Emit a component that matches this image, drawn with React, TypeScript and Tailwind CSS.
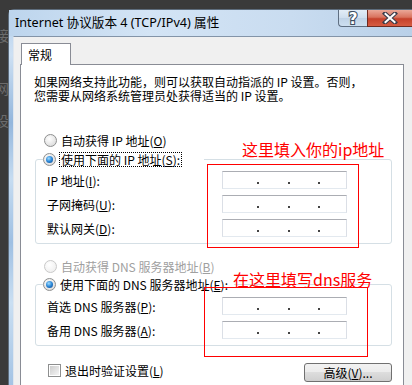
import type { ReactNode } from 'react'

function Radio({ checked, disabled }: { checked?: boolean; disabled?: boolean }) {
  return (
    <span
      className={
        disabled
          ? 'w-[13px] h-[13px] shrink-0 rounded-full border border-[#c9c9c9] bg-[radial-gradient(circle_at_40%_35%,#ffffff,#ebebeb)]'
          : 'w-[13px] h-[13px] shrink-0 rounded-full border border-[#8e8f8f] bg-[radial-gradient(circle_at_40%_35%,#ffffff,#d4d4d4)] flex items-center justify-center'
      }
    >
      {checked && (
        <span className="w-[7px] h-[7px] rounded-full bg-[radial-gradient(circle_at_40%_35%,#9fdcff,#2a86d6_50%,#0b3f86)]" />
      )}
    </span>
  )
}

function IpBox() {
  return (
    <div className="w-[125px] h-[18px] shrink-0 bg-white border border-t-[#abadb3] border-x-[#dbdfe6] border-b-[#e3e9ef] flex items-end pb-[4px] pl-[34px]">
      <span className="w-[2px] h-[2px] bg-[#444]" />
      <span className="w-[2px] h-[2px] bg-[#444] ml-[29px]" />
      <span className="w-[2px] h-[2px] bg-[#444] ml-[28px]" />
    </div>
  )
}

function Row({ children }: { children: ReactNode }) {
  return (
    <div className="h-[24px] flex items-center">
      <span className="w-[175px] shrink-0 whitespace-nowrap">{children}</span>
      <IpBox />
    </div>
  )
}

export default function App() {
  return (
    <div className="relative w-[412px] h-[385px] overflow-hidden bg-[#3a3a3a] flex flex-col text-[12px] leading-[13px] text-black font-['Noto_Sans_CJK_SC',sans-serif]">
      <div className="h-[9px] shrink-0" />
      <div className="flex flex-1 min-h-0">
        {/* desktop behind the window */}
        <div className="w-[8px] shrink-0 overflow-hidden text-[14px] leading-[14px] text-[#6c6c6c]">
          <div className="ml-[-5px] mt-[19px]">接</div>
          <div className="ml-[-5px] mt-[39px]">网</div>
          <div className="ml-[-5px] mt-[18px]">设</div>
        </div>

        {/* window */}
        <div className="flex-1 flex flex-col rounded-tl-[6px] border-l border-t border-[#5d6c7c] bg-[linear-gradient(180deg,#b4cfeb,#cde0f3_12%,#93b6dc_30%,#c6dcf1_45%,#9ebfe2_62%,#cadff2_78%,#a4c3e4)]">
          <div className="h-[26px] shrink-0 flex items-start bg-[linear-gradient(90deg,#bdd5ed,#d3e4f5_35%,#c9dcf0_70%,#b9d0e8)]">
            <span className="mt-[5px] ml-[6px] leading-[16px] text-[12.6px] whitespace-nowrap font-['Noto_Sans','Noto_Sans_CJK_SC',sans-serif]">
              Internet 协议版本 4 (TCP/IPv4) 属性
            </span>
            <div className="flex-1" />
            <div className="w-[29px] h-[17px] border-l border-b border-[#5f6f82] rounded-bl-[4px] bg-[linear-gradient(180deg,#e3edf7,#cfdeee_50%,#bfd2e6_50%,#cddff0)] flex items-center justify-center">
              <svg width="14" height="16" viewBox="0 0 14 16">
                <text x="7" y="13.5" textAnchor="middle" fontSize="15" fontWeight="700" fontFamily="DejaVu Sans, sans-serif" fill="#ffffff" stroke="#404e60" strokeWidth="2.2" paintOrder="stroke">?</text>
              </svg>
            </div>
            <div className="w-[45px] h-[17px] border-b border-l border-[#6e2b20] bg-[linear-gradient(180deg,#eaa898,#d9735e_45%,#c5412b_55%,#d65c42)] flex items-center justify-center">
              <svg width="16" height="12" viewBox="0 0 16 12">
                <path d="M3 1.5 L13 10.5 M13 1.5 L3 10.5" stroke="#3d3d4a" strokeWidth="4.2" strokeLinecap="square" />
                <path d="M3.5 2 L12.5 10 M12.5 2 L3.5 10" stroke="#ffffff" strokeWidth="2" strokeLinecap="square" />
              </svg>
            </div>
          </div>

          <div className="flex flex-1 min-h-0">
            <div className="w-[4px] shrink-0" />
            {/* client area */}
            <div className="flex-1 flex flex-col bg-[#f0f0f0] border-l border-t border-l-[#dfe6ee] border-t-[#8394a8] pl-[6px] pt-[6px]">
              <div className="relative z-[1] -mb-px ml-[1px] w-[50px] h-[22px] border border-b-0 border-[#898c95] bg-white flex items-center pl-[6px]">
                常规
              </div>
              <div className="w-[384px] flex-1 border border-b-0 border-[#898c95] bg-white flex flex-col pl-[13px] pt-[10px]">
                <p className="whitespace-nowrap leading-[14px]">
                  如果网络支持此功能，则可以获取自动指派的 IP 设置。否则，
                  <br />
                  您需要从网络系统管理员处获得适当的 IP 设置。
                </p>

                <div className="mt-[29px] ml-[10px] h-[16px] flex items-center gap-[4px]">
                  <Radio />
                  <span className="whitespace-nowrap">自动获得 IP 地址(<u>O</u>)</span>
                </div>

                <fieldset className="mt-[3px] ml-[1px] w-[357px] border border-[#d5dfe5] rounded-[3px]">
                  <legend className="ml-[7px] pr-[22px]">
                    <div className="h-[16px] flex items-center gap-[3px]">
                      <Radio checked />
                      <span className="whitespace-nowrap border border-dotted border-black px-[1px] leading-[13px]">
                        使用下面的 IP 地址(<u>S</u>):
                      </span>
                    </div>
                  </legend>
                  <div className="pl-[11px] pt-[1px] pb-[3px]">
                    <Row>IP 地址(<u>I</u>):</Row>
                    <Row>子网掩码(<u>U</u>):</Row>
                    <Row>默认网关(<u>D</u>):</Row>
                  </div>
                </fieldset>

                <div className="mt-[14px] ml-[10px] h-[16px] flex items-center gap-[4px]">
                  <Radio disabled />
                  <span className="whitespace-nowrap text-[#a0a0a0]">自动获得 DNS 服务器地址(<u>B</u>)</span>
                </div>

                <fieldset className="mt-[2px] ml-[1px] w-[357px] border border-[#d5dfe5] rounded-[3px]">
                  <legend className="ml-[7px] pr-[6px]">
                    <div className="h-[16px] flex items-center gap-[4px]">
                      <Radio checked />
                      <span className="whitespace-nowrap">使用下面的 DNS 服务器地址(<u>E</u>):</span>
                    </div>
                  </legend>
                  <div className="pl-[11px] pt-[2px] pb-[3px]">
                    <Row>首选 DNS 服务器(<u>P</u>):</Row>
                    <Row>备用 DNS 服务器(<u>A</u>):</Row>
                  </div>
                </fieldset>

                <div className="mt-[17px] ml-[14px] mr-[11px] flex items-start justify-between">
                  <div className="h-[14px] flex items-center gap-[4px]">
                    <span className="w-[13px] h-[13px] border border-[#8e8f8f] bg-white p-[1px]">
                      <span className="block w-full h-full bg-[linear-gradient(135deg,#cdcdcd,#f5f5f5)]" />
                    </span>
                    <span className="whitespace-nowrap">退出时验证设置(<u>L</u>)</span>
                  </div>
                  <button className="w-[88px] h-[19px] rounded-[3px] border border-[#707070] bg-[linear-gradient(180deg,#f2f2f2,#ebebeb_50%,#dddddd_50%,#cfcfcf)] flex items-center justify-center leading-[13px]">
                    高级(<u>V</u>)...
                  </button>
                </div>
              </div>
            </div>
          </div>
        </div>
      </div>

      {/* annotations drawn over the dialog */}
      <span className="absolute left-[242px] top-[141px] text-[16px] leading-[16px] text-[#ff0000] whitespace-nowrap">这里填入你的ip地址</span>
      <div className="absolute left-[207px] top-[164px] w-[152px] h-[84px] border border-[#ff0000]" />
      <span className="absolute left-[233px] top-[271px] text-[16px] leading-[16px] text-[#ff0000] whitespace-nowrap">在这里填写dns服务</span>
      <div className="absolute left-[204px] top-[287px] w-[164px] h-[70px] border border-[#ff0000]" />
    </div>
  )
}
